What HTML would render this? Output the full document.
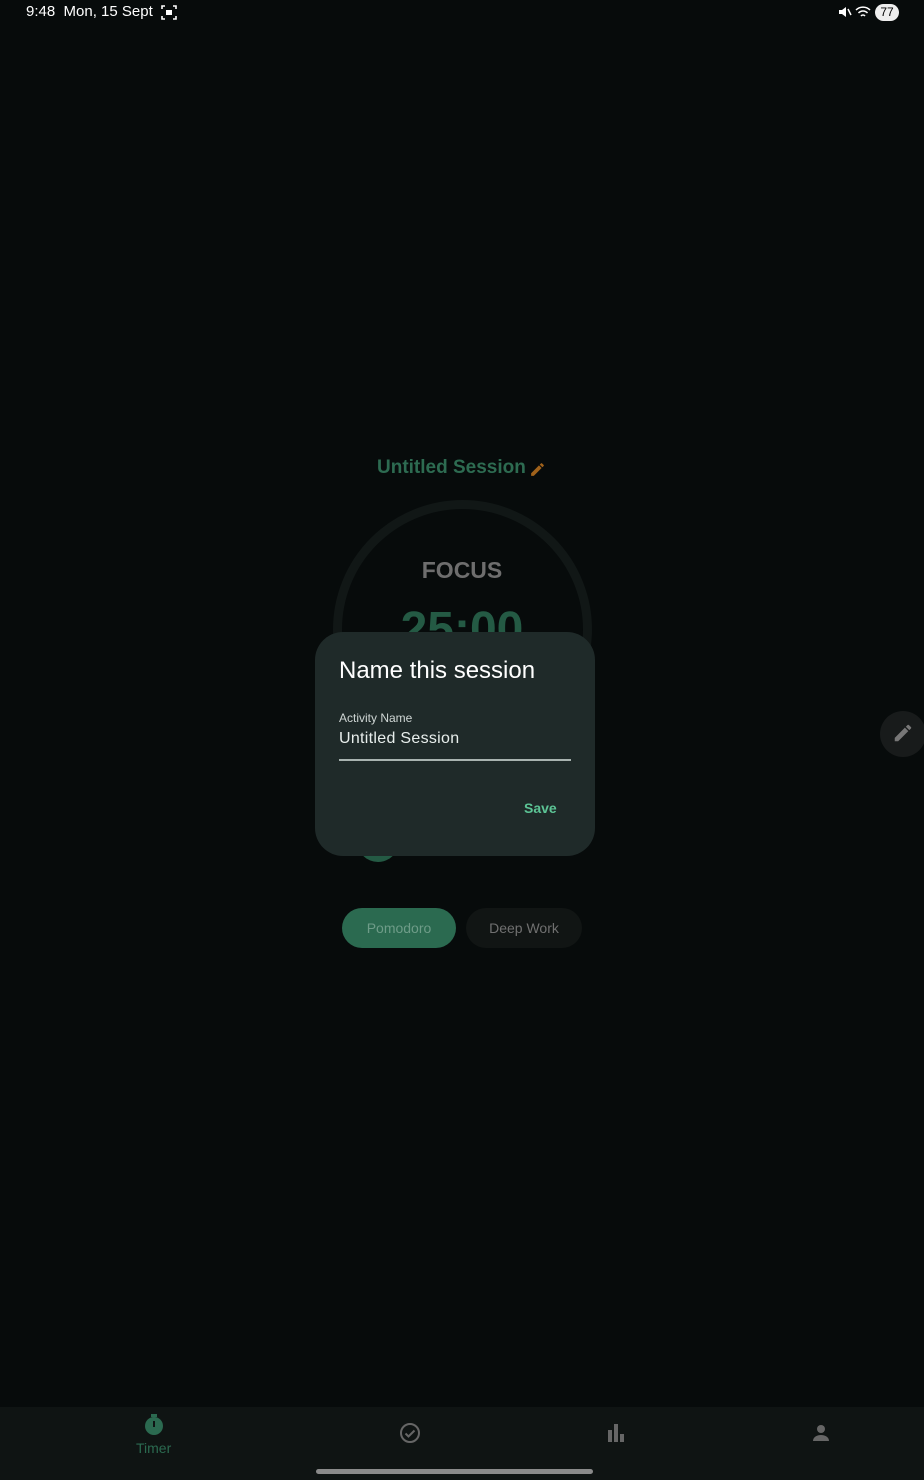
<!DOCTYPE html>
<html><head><style>
body{margin:0;width:924px;height:1480px;background:#070b0b;position:relative;overflow:hidden;font-family:"Liberation Sans",sans-serif}
.a{position:absolute}
</style></head><body>
<div class="a" style="left:26px;top:3px;color:#fff;font-size:15px;">9:48&nbsp; Mon, 15 Sept</div>
<svg class="a" style="left:160px;top:4px" width="18" height="17" viewBox="0 0 18 17" fill="none" stroke="#fff" stroke-width="1.6"><path d="M2 5V2h3M13 2h3v3M16 12v3h-3M5 15H2v-3"/><rect x="6" y="6" width="6" height="5" fill="#fff" stroke="none"/></svg>
<svg class="a" style="left:838px;top:5px" width="14" height="14" viewBox="0 0 14 14" fill="#fff"><path d="M1 5h3l4-3v10l-4-3H1z"/><path d="M10 4l3 6" stroke="#fff" stroke-width="1.5"/></svg>
<svg class="a" style="left:855px;top:5px" width="16" height="14" viewBox="0 0 16 14" fill="none" stroke="#fff" stroke-width="1.5"><path d="M1 5a10 10 0 0 1 14 0M3.5 8a6 6 0 0 1 9 0M6 11a2.5 2.5 0 0 1 4 0"/></svg>
<div class="a" style="left:875px;top:4px;width:24px;height:17px;border-radius:9px;background:#eee;color:#000;font-size:12px;text-align:center;line-height:17px">77</div>

<div class="a" style="left:377px;top:457px;color:#2d6b51;font-size:19px;font-weight:bold">Untitled Session</div>
<svg class="a" style="left:529px;top:461px" width="17" height="17" viewBox="0 0 24 24"><path d="M3 17.25V21h3.75L17.81 9.94l-3.75-3.75L3 17.25zM20.71 7.04a1 1 0 000-1.41l-2.34-2.34a1 1 0 00-1.41 0l-1.83 1.83 3.75 3.75 1.83-1.83z" fill="#a0621b"/></svg>
<div class="a" style="left:333px;top:500px;width:241px;height:241px;border-radius:50%;border:9px solid #111716;box-sizing:content-box;"></div>
<div class="a" style="left:0;width:924px;top:557px;text-align:center;color:#6e6e6e;font-size:23px;font-weight:bold">FOCUS</div>
<div class="a" style="left:0;width:924px;top:600px;text-align:center;color:#245a44;font-size:48px;font-weight:bold;height:32px;overflow:hidden;line-height:60px">25:00</div>
<div class="a" style="left:357px;top:820px;width:42px;height:42px;border-radius:50%;background:#245a44"></div>

<div class="a" style="left:315px;top:632px;width:280px;height:224px;border-radius:28px;background:#1f2a29"></div>
<div class="a" style="left:339px;top:657px;color:#fff;font-size:24px">Name this session</div>
<div class="a" style="left:339px;top:711px;color:#cfd6d4;font-size:12px">Activity Name</div>
<div class="a" style="left:339px;top:730px;color:#e8eeec;font-size:16px;letter-spacing:0.3px">Untitled Session</div>
<div class="a" style="left:339px;top:759px;width:232px;height:2px;background:#a8b3b0"></div>
<div class="a" style="left:524px;top:800px;color:#5cc495;font-size:14px;font-weight:bold">Save</div>

<div class="a" style="left:342px;top:908px;width:114px;height:40px;border-radius:20px;background:#2b6a50;color:#6e9c88;font-size:14px;text-align:center;line-height:40px">Pomodoro</div>
<div class="a" style="left:466px;top:908px;width:116px;height:40px;border-radius:20px;background:#111514;color:#707070;font-size:14px;text-align:center;line-height:40px">Deep Work</div>

<div class="a" style="left:880px;top:711px;width:46px;height:46px;border-radius:50%;background:#181b1b"></div>
<svg class="a" style="left:892px;top:722px" width="22" height="22" viewBox="0 0 24 24"><path d="M3 17.25V21h3.75L17.81 9.94l-3.75-3.75L3 17.25zM20.71 7.04a1 1 0 000-1.41l-2.34-2.34a1 1 0 00-1.41 0l-1.83 1.83 3.75 3.75 1.83-1.83z" fill="#777"/></svg>

<div class="a" style="left:0;top:1407px;width:924px;height:73px;background:#0f1413"></div>
<svg class="a" style="left:143px;top:1413px" width="22" height="24" viewBox="0 0 22 24"><rect x="8" y="1" width="6" height="3" fill="#2b6a50"/><circle cx="11" cy="13" r="9" fill="#2b6a50"/><rect x="10" y="8" width="2" height="6" fill="#0f1413"/></svg>
<div class="a" style="left:136px;top:1440px;color:#2b6a50;font-size:14px">Timer</div>
<svg class="a" style="left:399px;top:1422px" width="22" height="22" viewBox="0 0 22 22" fill="none" stroke="#666" stroke-width="2"><circle cx="11" cy="11" r="9"/><path d="M6.5 11.5l3 3 6-6"/></svg>
<svg class="a" style="left:607px;top:1424px" width="18" height="18" viewBox="0 0 18 18" fill="#666"><rect x="1" y="6" width="4" height="12"/><rect x="7" y="0" width="4" height="18"/><rect x="13" y="10" width="4" height="8"/></svg>
<svg class="a" style="left:812px;top:1424px" width="18" height="18" viewBox="0 0 18 18" fill="#666"><circle cx="9" cy="5" r="4"/><path d="M1 17c0-4 4-6 8-6s8 2 8 6z"/></svg>
<div class="a" style="left:316px;top:1469px;width:277px;height:5px;border-radius:3px;background:#8a8a8a"></div>
</body></html>
